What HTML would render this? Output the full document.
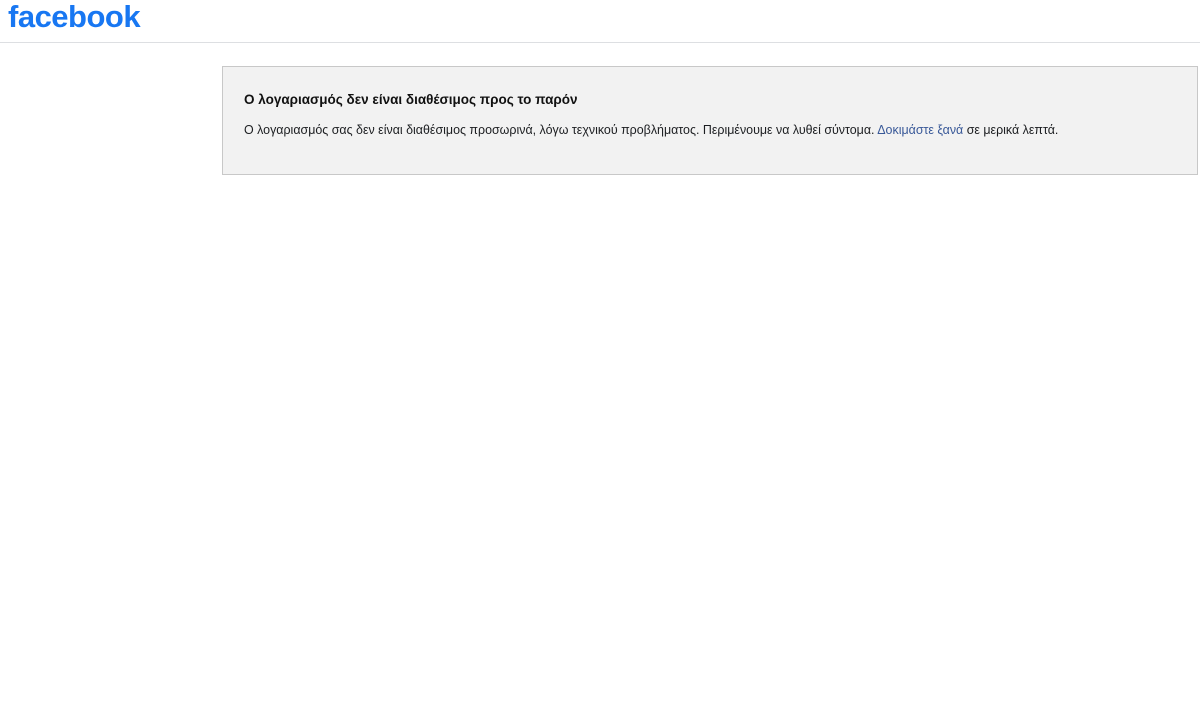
<!DOCTYPE html>
<html><head><meta charset="utf-8"><style>
body{margin:0;background:#fff;font-family:"Liberation Sans",Arial,sans-serif;width:1200px;height:720px;overflow:hidden}
.hdr{height:42px;border-bottom:1px solid #dddfe2;position:relative}
.logo{position:absolute;left:8px;top:-1px;font-size:31px;font-weight:bold;color:#1877f2;letter-spacing:-0.5px}
.box{position:absolute;left:222px;top:66px;width:974px;height:107px;border:1px solid #c8c8c8;background:#f2f2f2}
h2{position:absolute;left:21px;top:25px;margin:0;font-size:13.5px;font-weight:bold;color:#111}
p{position:absolute;left:21px;top:56px;margin:0;font-size:12.45px;color:#1c1e21;white-space:nowrap}
a{color:#385898;text-decoration:none}
</style></head><body>
<div class="hdr"><div class="logo">facebook</div></div>
<div class="box">
<h2>Ο λογαριασμός δεν είναι διαθέσιμος προς το παρόν</h2>
<p>Ο λογαριασμός σας δεν είναι διαθέσιμος προσωρινά, λόγω τεχνικού προβλήματος. Περιμένουμε να λυθεί σύντομα. <a>Δοκιμάστε ξανά</a> σε μερικά λεπτά.</p>
</div>
</body></html>
